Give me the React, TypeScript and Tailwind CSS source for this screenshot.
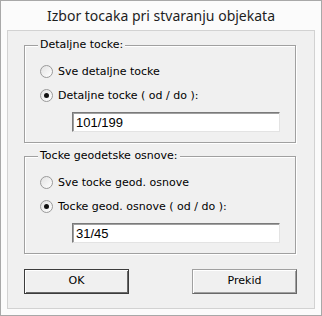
import React, { useState } from 'react';

const ui = "font-['DejaVu_Sans',sans-serif] text-[11px] text-black";

const Radio = ({ checked, label, onClick }: { checked: boolean; label: string; onClick: () => void }) => (
  <button onClick={onClick} className={`flex items-center gap-[5px] h-[13px] ${ui} leading-[13px] text-left`}>
    <span className="relative w-[13px] h-[13px] rounded-full border border-[#9a9a9a] bg-gradient-to-br from-[#e2e2e2] to-white flex items-center justify-center shrink-0">
      {checked && <span className="w-[5px] h-[5px] rounded-full bg-[#111]" />}
    </span>
    <span>{label}</span>
  </button>
);

const Group = ({
  title,
  options,
  value,
}: {
  title: string;
  options: [string, string];
  value: string;
}) => {
  const [sel, setSel] = useState(1);
  const [text, setText] = useState(value);
  return (
    <div className="relative w-[272px] h-[98px] border border-[#a0a0a0] shadow-[1px_1px_0_#ffffff,inset_1px_1px_0_#ffffff] pl-[15px] pt-[19px] flex flex-col">
      <span className={`absolute left-[13px] top-[-8px] px-[2px] bg-[#f0f0f0] ${ui} leading-[14px]`}>{title}</span>
      <Radio checked={sel === 0} label={options[0]} onClick={() => setSel(0)} />
      <div className="mt-[11px]">
        <Radio checked={sel === 1} label={options[1]} onClick={() => setSel(1)} />
      </div>
      <input
        value={text}
        onChange={e => setText(e.target.value)}
        className="mt-[10px] ml-[32px] w-[208px] h-[20px] bg-white border border-t-[#7a7a7a] border-l-[#7a7a7a] border-b-[#e3e3e3] border-r-[#e3e3e3] shadow-[inset_1px_1px_0_#a0a0a0] px-[3px] font-['Liberation_Sans',sans-serif] text-[13px] text-black outline-none"
      />
    </div>
  );
};

export default function App() {
  return (
    <div className="w-[322px] h-[316px] border border-[#a8a8a8] bg-[#fbfbfb] px-[6px] pb-[6px] flex flex-col">
      <div className="h-[29px] flex items-center justify-center font-['Noto_Sans',sans-serif] text-[14px] text-[#1e1e1e] pb-[1px]">
        Izbor tocaka pri stvaranju objekata
      </div>
      <div className="flex-1 border border-[#d2d2d2] bg-[#f0f0f0] pl-[16px] pt-[14px] flex flex-col">
        <Group title="Detaljne tocke:" options={['Sve detaljne tocke', 'Detaljne tocke ( od / do ):']} value="101/199" />
        <div className="mt-[13px]">
          <Group title="Tocke geodetske osnove:" options={['Sve tocke geod. osnove', 'Tocke geod. osnove ( od / do ):']} value="31/45" />
        </div>
        <div className="mt-[15px] flex gap-[63px]">
          <button className={`w-[105px] h-[25px] border border-[#3c3c3c] bg-[#f0f0f0] shadow-[inset_1px_1px_0_#ffffff,inset_-1px_-1px_0_#696969] ${ui}`}>
            OK
          </button>
          <button className={`w-[105px] h-[25px] border border-t-[#a0a0a0] border-l-[#a0a0a0] border-b-[#696969] border-r-[#696969] bg-[#f0f0f0] shadow-[inset_1px_1px_0_#ffffff,inset_-1px_-1px_0_#a0a0a0] ${ui}`}>
            Prekid
          </button>
        </div>
      </div>
    </div>
  );
}
